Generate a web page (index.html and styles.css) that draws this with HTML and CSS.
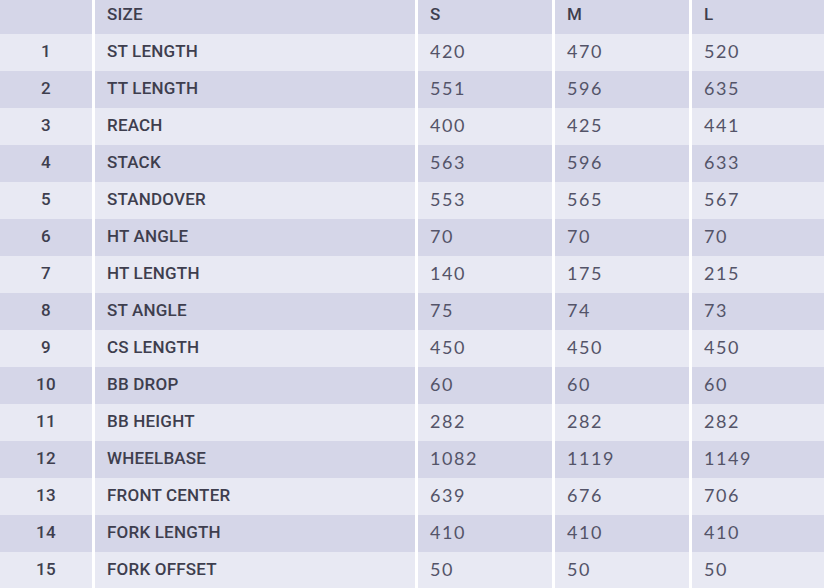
FILE: index.html
```html
<!DOCTYPE html>
<html>
<head>
<meta charset="utf-8">
<link rel="stylesheet" href="styles.css">
</head>
<body>
<table class="geo">
  <thead>
    <tr><th class="idx"></th><th class="lbl">SIZE</th><th class="sz">S</th><th class="sz">M</th><th class="sz">L</th></tr>
  </thead>
  <tbody>
    <tr><td class="idx">1</td><td class="lbl">ST LENGTH</td><td>420</td><td>470</td><td>520</td></tr>
    <tr><td class="idx">2</td><td class="lbl">TT LENGTH</td><td>551</td><td>596</td><td>635</td></tr>
    <tr><td class="idx">3</td><td class="lbl">REACH</td><td>400</td><td>425</td><td>441</td></tr>
    <tr><td class="idx">4</td><td class="lbl">STACK</td><td>563</td><td>596</td><td>633</td></tr>
    <tr><td class="idx">5</td><td class="lbl">STANDOVER</td><td>553</td><td>565</td><td>567</td></tr>
    <tr><td class="idx">6</td><td class="lbl">HT ANGLE</td><td>70</td><td>70</td><td>70</td></tr>
    <tr><td class="idx">7</td><td class="lbl">HT LENGTH</td><td>140</td><td>175</td><td>215</td></tr>
    <tr><td class="idx">8</td><td class="lbl">ST ANGLE</td><td>75</td><td>74</td><td>73</td></tr>
    <tr><td class="idx">9</td><td class="lbl">CS LENGTH</td><td>450</td><td>450</td><td>450</td></tr>
    <tr><td class="idx">10</td><td class="lbl">BB DROP</td><td>60</td><td>60</td><td>60</td></tr>
    <tr><td class="idx">11</td><td class="lbl">BB HEIGHT</td><td>282</td><td>282</td><td>282</td></tr>
    <tr><td class="idx">12</td><td class="lbl">WHEELBASE</td><td>1082</td><td>1119</td><td>1149</td></tr>
    <tr><td class="idx">13</td><td class="lbl">FRONT CENTER</td><td>639</td><td>676</td><td>706</td></tr>
    <tr><td class="idx">14</td><td class="lbl">FORK LENGTH</td><td>410</td><td>410</td><td>410</td></tr>
    <tr><td class="idx">15</td><td class="lbl">FORK OFFSET</td><td>50</td><td>50</td><td>50</td></tr>
  </tbody>
</table>
</body>
</html>
```
FILE: styles.css
```css
html, body {
  margin: 0;
  padding: 0;
  background: #ffffff;
}
.geo {
  width: 827px;
  border-collapse: separate;
  border-spacing: 3px 0;
  margin-left: -3px;
  table-layout: fixed;
  font-family: "Lato", "Roboto", "Liberation Sans", sans-serif;
  font-size: 18px;
  font-weight: 400;
  color: #545468;
}
.geo th, .geo td {
  height: 37px;
  padding: 0 0 4px 12px;
  text-align: left;
  vertical-align: middle;
  box-sizing: border-box;
  letter-spacing: 1.6px;
}
.geo thead th {
  height: 34px;
  padding-bottom: 7px;
  background: #d5d6e8;
  font-family: "Roboto", "Liberation Sans", sans-serif;
  font-size: 17px;
  font-weight: 500;
  letter-spacing: 0.2px;
  color: #3e3e4e;
}
.geo tbody tr:nth-child(odd) td { background: #e8e9f3; }
.geo tbody tr:nth-child(even) td { background: #d5d6e8; }
.geo .idx {
  width: 92px;
  padding-left: 0;
  text-align: center;
  font-family: "Roboto", "Liberation Sans", sans-serif;
  font-size: 17px;
  font-weight: 500;
  letter-spacing: 0.4px;
  color: #3e3e4e;
}
.geo .lbl {
  width: 320px;
  font-family: "Roboto", "Liberation Sans", sans-serif;
  font-size: 17px;
  font-weight: 500;
  letter-spacing: 0.2px;
  color: #3e3e4e;
}
.geo .sz {
  width: 134px;
}
```
